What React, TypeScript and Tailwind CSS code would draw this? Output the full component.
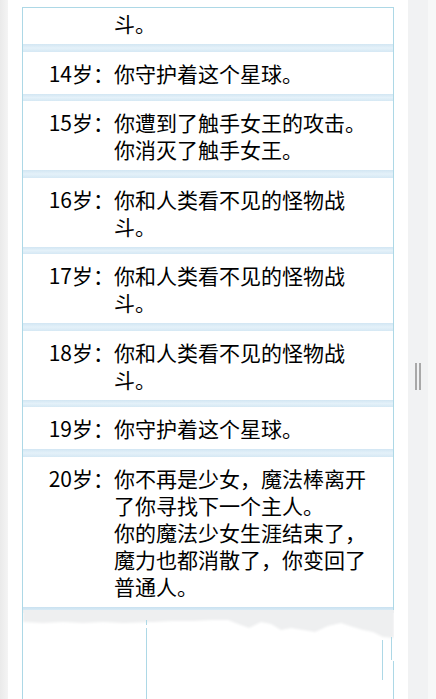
import React from "react";

type Row = { label: string; paras: string[] };

const rows: Row[] = [
  { label: "14岁：", paras: ["你守护着这个星球。"] },
  { label: "15岁：", paras: ["你遭到了触手女王的攻击。", "你消灭了触手女王。"] },
  { label: "16岁：", paras: ["你和人类看不见的怪物战斗。"] },
  { label: "17岁：", paras: ["你和人类看不见的怪物战斗。"] },
  { label: "18岁：", paras: ["你和人类看不见的怪物战斗。"] },
  { label: "19岁：", paras: ["你守护着这个星球。"] },
  {
    label: "20岁：",
    paras: [
      "你不再是少女，魔法棒离开了你寻找下一个主人。",
      "你的魔法少女生涯结束了，魔力也都消散了，你变回了普通人。",
    ],
  },
];

function Sep() {
  return <div className="h-[7.5px] bg-[linear-gradient(to_bottom,#d2e6f3,#e4f1f9_50%,#d5e8f4)]" />;
}

function RowView({ row }: { row: Row }) {
  return (
    <div className="flex bg-white pl-[25px] pt-[8px] pb-[7px]">
      <div className="w-[66px] shrink-0 whitespace-nowrap text-right">{row.label}</div>
      <div className="w-[262px]">
        {row.paras.map((p, i) => (
          <div key={i}>{p}</div>
        ))}
      </div>
    </div>
  );
}

export default function App() {
  return (
    <div
      className="flex h-[699px] w-[436px] overflow-hidden bg-white text-[21px] leading-[27px] text-black"
      style={{ fontFamily: '"Noto Sans CJK SC", "Noto Sans", sans-serif' }}
    >
      <div className="w-[8px] shrink-0 bg-[linear-gradient(to_right,#eaeaea,#f4f4f4)]" />
      <div className="flex w-[400px] shrink-0 flex-col bg-white px-[14px] pt-[7px]">
        <div className="border-x border-t border-[#add8e6]">
          <div className="flex bg-white pl-[25px] pt-[2px] pb-[7px]">
            <div className="w-[66px] shrink-0" />
            <div className="w-[262px]">斗。</div>
          </div>
          {rows.map((r, i) => (
            <React.Fragment key={i}>
              <Sep />
              <RowView row={r} />
            </React.Fragment>
          ))}
          <div className="h-[3.5px] bg-[linear-gradient(to_bottom,#c9e1f0,#d8eaf5)]" />
        </div>
        <div className="flex-1 border-l border-[#add8e6]">
          <svg width="371" height="89" viewBox="0 0 371 89" className="block">
            <defs>
              <filter id="soft" x="-5%" y="-20%" width="110%" height="150%">
                <feGaussianBlur stdDeviation="1.2" />
              </filter>
            </defs>
            <path
              d="M0 0 H371 V28 L360 27 L350 22 L340 20 L330 17 L318 13 L305 16 L292 22 L280 20 L268 18 L258 20 L248 14 L238 12 L226 18 L215 14 L205 10 L190 10 L170 11 L150 11 L130 12 L100 13 L80 12 L60 13 L40 12 L20 13 L0 12 Z"
              fill="#eeeff0"
              filter="url(#soft)"
            />
            <rect x="0" y="0" width="371" height="3" fill="#eeeff0" />
            <line x1="123.5" y1="10" x2="123.5" y2="15" stroke="#add8e6" strokeWidth="1" />
            <line x1="123.5" y1="18" x2="123.5" y2="89" stroke="#add8e6" strokeWidth="1" />
            <line x1="359.5" y1="30" x2="359.5" y2="70" stroke="#add8e6" strokeWidth="1" />
            <line x1="368.5" y1="27" x2="368.5" y2="50" stroke="#add8e6" strokeWidth="1" />
            <line x1="370.5" y1="51" x2="370.5" y2="89" stroke="#add8e6" strokeWidth="1" />
          </svg>
        </div>
      </div>
      <div className="flex w-[20px] shrink-0 justify-center gap-[2px] bg-[#f1f2f3] pt-[363px]">
        <div className="h-[27px] w-[2px] bg-[#a8a8a8]" />
        <div className="h-[27px] w-[2px] bg-[#a8a8a8]" />
      </div>
      <div className="flex-1 bg-[#f7f8f8]" />
    </div>
  );
}
